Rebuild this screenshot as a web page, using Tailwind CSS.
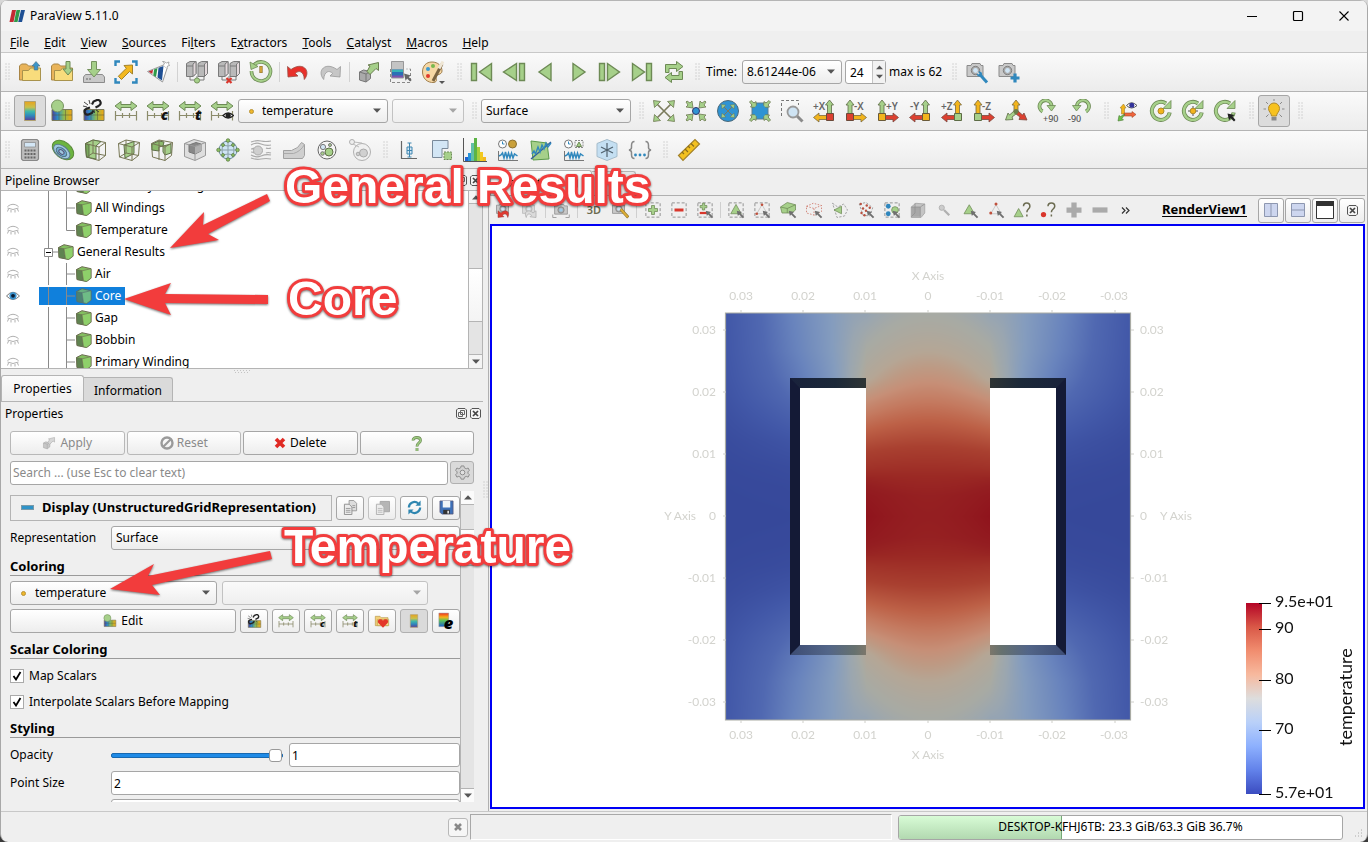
<!DOCTYPE html>
<html lang="en">
<head>
    <meta charset="UTF-8">
    <meta name="viewport" content="width=device-width, initial-scale=1.0">
    <title>ParaView 5.11.0</title>
    <script src="https://cdn.jsdelivr.net/npm/@tailwindcss/browser@4"></script>
</head>
<body class="h-screen bg-linear-to-b from-[#d8d8d8] to-[#3a3a3a] font-['Noto_Sans','Open_Sans',sans-serif] text-xs text-black overflow-hidden">

    <!-- Icon sprite -->
    <svg class="absolute w-0 h-0 invisible" xmlns="http://www.w3.org/2000/svg">
        <defs>
            <linearGradient id="rainbow" x1="0" y1="0" x2="0" y2="1">
                <stop offset="0" stop-color="#e8a21d"/><stop offset=".3" stop-color="#c9c04a"/><stop offset=".52" stop-color="#3fb8a8"/><stop offset=".75" stop-color="#2f86bd"/><stop offset="1" stop-color="#5c3c94"/>
            </linearGradient>
            <linearGradient id="rainbowH" x1="0" y1="0" x2="1" y2="0">
                <stop offset="0" stop-color="#4a3f9a"/><stop offset=".3" stop-color="#2d93c8"/><stop offset=".6" stop-color="#8fba50"/><stop offset="1" stop-color="#f3a712"/>
            </linearGradient>
            <linearGradient id="jet" x1="0" y1="0" x2="0" y2="1">
                <stop offset="0" stop-color="#f0311d"/><stop offset=".3" stop-color="#f7b21a"/><stop offset=".55" stop-color="#5cc45a"/><stop offset="1" stop-color="#1b5fd0"/>
            </linearGradient>
        </defs>
        <symbol id="logo" viewBox="0 0 16 14"><path d="M3 1h4L4.500 13H.5z" fill="#c22a33"/><path d="M7.500 1h3.700L8.500 13H5z" fill="#2f9a49"/><path d="M12 1h4l-3 12H9.200z" fill="#1e4f94"/></symbol>
        <symbol id="open" viewBox="0 0 24 24"><path d="M1.500 20V6l2-2h5l2 2h9v14z" fill="#e9b45a" stroke="#a98545"/><path d="M4.500 20.500V10.500h6l2-2.500H22.500v12.500z" fill="#f8dc7c" stroke="#a9934d"/><path d="M18 1.500l4 4.500h-2.200v4h-3.600V6H14z" fill="#3b95c9" stroke="#4f6f80" stroke-width=".6"/></symbol>
        <symbol id="load" viewBox="0 0 24 24"><path d="M1.500 20V6l2-2h5l2 2h9v14z" fill="#e9b45a" stroke="#a98545"/><path d="M4.500 20.500V10.500h6l2-2.500H22.500v12.500z" fill="#f8dc7c" stroke="#a9934d"/><path d="M16 1.500h4V9h3l-5 6-5-6h3z" fill="#a6d08a" stroke="#6d8a55"/></symbol>
        <symbol id="save" viewBox="0 0 24 24"><path d="M3.500 14.500h17l2 2.500v5.500h-21V17z" fill="#c9c9c9" stroke="#8b8b8b"/><circle cx="5" cy="19" r="1" fill="#888"/><circle cx="8" cy="19" r="1" fill="#888"/><path d="M9.500 1.500h5v8h4L12 17 5.500 9.500h4z" fill="#a6d08a" stroke="#76935e"/></symbol>
        <symbol id="capture" viewBox="0 0 24 24"><path d="M1.500 6V1.500H6M18 1.500h4.500V6M22.500 18v4.500H18M6 22.500H1.500V18" fill="none" stroke="#3088bd" stroke-width="2.400"/><path d="M18.500 5v9l-3-2.500-8 8-3.200-3.200 8-8L10 5.500z" fill="#f3b81f" stroke="#a3822a"/></symbol>
        <symbol id="catalyst" viewBox="0 0 24 24"><path d="M17.500 5L21 8.500 16.500 22 1.500 11.500z" fill="#fff" stroke="#9a9a9a"/><path d="M2.500 11.500l4.500-1.800-.7 4.300z" fill="#c22a33"/><path d="M8 9.500l3.500-1.500L10 17l-2.700-1.800z" fill="#2f9a49"/><path d="M12.500 7.700l5-1.700L16 20.500l-4.500-3z" fill="#1e4f94"/><path d="M17.500 5l1-2-2-1.500 1.500 0 2.500 1.500 2.500-1-.5 2 1.200 1.500-2.200.5-.5 2.500" stroke="#999" fill="#fff" stroke-width=".8"/></symbol>
        <symbol id="server" viewBox="0 0 24 24"><g stroke="#7a7a7a" stroke-width="1"><path d="M1.500 3.500L5 1.500h6v12l-3 3H1.500z" fill="#b9b9b9"/><path d="M8 4l3-2.500v12l-3 3z" fill="#e3d9dc"/><path d="M13 3.500l3.500-2h6v12l-3 3H13z" fill="#b9b9b9"/><path d="M19.500 4l3-2.500v12l-3 3z" fill="#e3d9dc"/><path d="M1.500 6h6.500M13 6h6M5 16.500v3.500h14v-3.500M12 16v4" fill="none"/></g></symbol>
        <symbol id="connect" viewBox="0 0 24 24"><use href="#server"/><circle cx="12" cy="20.500" r="2.600" fill="#a6d08a" stroke="#76935e"/></symbol>
        <symbol id="disconnect" viewBox="0 0 24 24"><use href="#server"/><path d="M9.500 18l5 5m0-5l-5 5" stroke="#d9362c" stroke-width="2.200"/></symbol>
        <symbol id="history" viewBox="0 0 24 24"><path d="M5 5a9.500 9.500 0 1 1-2.500 6" fill="none" stroke="#6d8a55" stroke-width="3.600"/><path d="M5 5a9.500 9.500 0 1 1-2.500 6" fill="none" stroke="#a6d08a" stroke-width="2"/><path d="M1 2l1 7.500 7-3z" fill="#a6d08a" stroke="#6d8a55" stroke-width=".8"/><path d="M12 6v7" stroke="#8a6d2a" stroke-width="3.200"/><path d="M12 6.500v6" stroke="#d9a93c" stroke-width="1.800"/></symbol>
        <symbol id="undo" viewBox="0 0 24 24"><path d="M1.500 6.500L2 17l10-1-2.700-2.700c3.500-3.300 8.500-2.300 9 6.200C25.500 11 17 1 5 9.500z" fill="#e8302a" stroke="#9a4f45" stroke-width=".8"/></symbol>
        <symbol id="redo" viewBox="0 0 24 24"><path d="M22.500 6.500L22 17l-10-1 2.700-2.700c-3.500-3.300-8.500-2.300-9 6.200C-1.500 11 7 1 19 9.500z" fill="#c6c6c6" stroke="#999" stroke-width=".8"/></symbol>
        <symbol id="extract" viewBox="0 0 24 24"><path d="M2.500 12l4-2 7 1.500v7L9 22l-6.500-2z" fill="#aaa" stroke="#777"/><path d="M2.500 12l6.500 2v8M9 14l4.500-2.500" fill="none" stroke="#777"/><path d="M21.500 2.500v8l-2.500-2-6 6-3-3 3-5.500L11 5z" fill="#a6d08a" stroke="#6b7f50"/></symbol>
        <symbol id="grad-sel" viewBox="0 0 24 24"><path d="M2.500 1.500h12V18h-12z" fill="#7a50b0" stroke="#999"/><path d="M3 2h11v7.500H3z" fill="#c4c4c4"/><path d="M3 9.500h11V12H3z" fill="#38b3b5"/><path d="M3 12h11v3.500H3z" fill="#2a70b5"/><path d="M1.500 9v13.500h20V9h-4" fill="none" stroke="#888" stroke-dasharray="3 2"/><path d="M15 13.500l7 2-2.300 1.400 3 3.100-1.600 1.600-3-3-1.500 2.200z" fill="#666"/></symbol>
        <symbol id="palette" viewBox="0 0 24 24"><path d="M11 2c6 0 10 4 10 9 0 4-6 3-6 6s2 4-2 5.500C6 23 1.500 18 1.500 12S5 2 11 2z" fill="#f6d7a4" stroke="#a07f4d"/><circle cx="7" cy="9" r="2" fill="#3d9bd2"/><circle cx="12" cy="6" r="2" fill="#79b94e"/><circle cx="7" cy="16" r="2" fill="#e03a2c"/><path d="M21 4l-9 17" stroke="#7a6340" stroke-width="3"/><path d="M22 1.500l-4 7" stroke="#efe6d5" stroke-width="3"/><path d="M18 21h6l-3 3z" fill="#555"/></symbol>
        <symbol id="first" viewBox="0 0 24 24"><path d="M1.500 3.500h5v17h-5z M21.500 3.500v17L9.500 12z" fill="#a6d08a" stroke="#6d8a55" stroke-width="1.400"/></symbol>
        <symbol id="prev" viewBox="0 0 24 24"><path d="M17.500 3.500h5v17h-5z M14.500 3.500v17L1.500 12z" fill="#a6d08a" stroke="#6d8a55" stroke-width="1.400"/></symbol>
        <symbol id="rev" viewBox="0 0 24 24"><path d="M17 3.500v17L5 12z" fill="#a6d08a" stroke="#6d8a55" stroke-width="1.400"/></symbol>
        <symbol id="play" viewBox="0 0 24 24"><path d="M7 3.500v17L19 12z" fill="#a6d08a" stroke="#6d8a55" stroke-width="1.400"/></symbol>
        <symbol id="next" viewBox="0 0 24 24"><path d="M1.500 3.500h5v17h-5z M9.500 3.500v17l12-8.500z" fill="#a6d08a" stroke="#6d8a55" stroke-width="1.400"/></symbol>
        <symbol id="last" viewBox="0 0 24 24"><path d="M16.500 3.500h5v17h-5z M2.500 3.500v17l12-8.500z" fill="#a6d08a" stroke="#6d8a55" stroke-width="1.400"/></symbol>
        <symbol id="loop" viewBox="0 0 24 24"><g fill="#a6d08a" stroke="#6d8a55"><path d="M3.500 12.500V4.500h11V1.500l6.500 5-6.500 5V8.500H7v4z"/><path d="M20.500 11.500v8h-11v3l-6.500-5 6.500-5v3H17v-4z"/></g></symbol>
        <symbol id="camera" viewBox="0 0 24 24"><path d="M2 5.500h4l1-2h8l1 2h2v11H2z" fill="#c9c9c9" stroke="#8b8b8b"/><circle cx="10.500" cy="10.500" r="4.200" fill="#aaa" stroke="#808080"/><circle cx="10.500" cy="10.500" r="2.400" fill="#cfe4f4"/></symbol>
        <symbol id="cam-wrench" viewBox="0 0 24 24"><use href="#camera"/><path d="M14 13.500l8 9" stroke="#3088bd" stroke-width="3"/><circle cx="14.500" cy="14" r="2.500" fill="#3088bd"/><path d="M12 12l2 2" stroke="#d5d5d5" stroke-width="1.600"/></symbol>
        <symbol id="cam-plus" viewBox="0 0 24 24"><use href="#camera"/><path d="M18 13.500v9M13.500 18h9" stroke="#3088bd" stroke-width="3.200"/></symbol>
        <symbol id="cam-undo" viewBox="0 0 24 24"><use href="#camera"/><path d="M4 13v9l8-1-2-2c3-3 6-2 7 3 4-8-3-12-9-6z" fill="#e03a30" stroke="#8d3a33" stroke-width=".6"/></symbol>
        <symbol id="cam-redo" viewBox="0 0 24 24"><g opacity=".55"><use href="#camera"/><path d="M20 13v9l-8-1 2-2c-3-3-6-2-7 3-4-8 3-12 9-6z" fill="#ccc" stroke="#777"/></g></symbol>
        <symbol id="cam-cap" viewBox="0 0 24 24"><path d="M3.500 6.500h4l1-2h7l1 2h4v11h-17z" fill="#c9c9c9" stroke="#8b8b8b"/><circle cx="12" cy="12" r="4.200" fill="#aaa" stroke="#808080"/><circle cx="12" cy="12" r="2.400" fill="#9fcbe8"/><path d="M1 18v4h5M18 22h5v-4" fill="none" stroke="#888"/><path d="M4 3h3" stroke="#d33"/></symbol>
        <symbol id="cam-pencil" viewBox="0 0 24 24"><use href="#camera"/><path d="M13 11l10 11" stroke="#8d7125" stroke-width="4"/><path d="M13 11l9.500 10.500" stroke="#dcae37" stroke-width="2.500"/></symbol>
        <symbol id="bar" viewBox="0 0 24 24"><path d="M6.500 2.500h11v19h-11z" fill="url(#rainbow)" stroke="#b0a070"/></symbol>
        <symbol id="editmap" viewBox="0 0 24 24"><path d="M2 10.500h20v11H2z" fill="url(#rainbowH)" stroke="#7c7c5c"/><path d="M9 11v10M15.500 11v10M2 16h20" stroke="#55553a" stroke-opacity=".5"/><circle cx="7.500" cy="7" r="6" fill="#a6d08a" stroke="#76935e"/></symbol>
        <symbol id="unlink" viewBox="0 0 24 24"><path d="M2 10.500h20v11H2z" fill="url(#rainbowH)" stroke="#7c7c5c"/><path d="M9 11v10M15.500 11v10M2 16h20" stroke="#55553a" stroke-opacity=".5"/><path d="M8 8.500l-3 1c-4 1.500-2.500 7 1.500 6l3.500-1.500 1.500-2.500M10 5.500l1.500-3 3.500-1.500c4-.5 5 4.500 1.500 6l-3 1.500" fill="none" stroke="#222" stroke-width="2.200"/><path d="M2 3l4 3M7 1l1 4M1 7l4 1M14 11l3 2M12 11l.5 3" stroke="#333" stroke-width=".9"/></symbol>
        <symbol id="range" viewBox="0 0 24 24"><path d="M1 7l6-4.500v3h10v-3L23 7l-6 4.500v-3H7v3z" fill="#a6d08a" stroke="#6d8a55"/><path d="M1.500 12v9.500M8.500 14v5M15.500 14v5M22.500 12v9.500M1.500 16.500h21" fill="none" stroke="#8b8b6b" stroke-width="1.200"/></symbol>
        <symbol id="range-c" viewBox="0 0 24 24"><use href="#range"/><text x="15" y="21" font-family="Noto Sans" font-weight="900" font-style="italic" font-size="14" fill="#111">c</text></symbol>
        <symbol id="range-t" viewBox="0 0 24 24"><use href="#range"/><text x="17" y="21" font-family="Noto Sans" font-weight="900" font-style="italic" font-size="14" fill="#111">t</text></symbol>
        <symbol id="range-v" viewBox="0 0 24 24"><use href="#range"/><path d="M13 16.500q5-5 10.500 0-5.500 5-10.500 0z" fill="#fff" stroke="#222" stroke-width="1.300"/><circle cx="18.200" cy="16.500" r="2.600" fill="#222"/></symbol>
        <symbol id="resetcam" viewBox="0 0 24 24"><path d="M5 5l14 14M19 5L5 19" stroke="#7a7a5c" stroke-width="1.600"/><path d="M1.500 1.500l7 1-6 6zM22.500 1.500l-7 1 6 6zM1.500 22.500l7-1-6-6zM22.500 22.500l-7-1 6-6z" fill="#a6d08a" stroke="#6d7a50" stroke-width=".8"/></symbol>
        <symbol id="arrows-in" viewBox="0 0 24 24"><g fill="#a6d08a" stroke="#6d7a50" stroke-width=".8"><path d="M9 9l-1-7-2 2-3-2-1 1 2 3-2 2z"/><path d="M15 9l1-7 2 2 3-2 1 1-2 3 2 2z"/><path d="M9 15l-1 7-2-2-3 2-1-1 2-3-2-2z"/><path d="M15 15l1 7 2-2 3 2 1-1-2-3 2-2z"/></g></symbol>
        <symbol id="zoomdata" viewBox="0 0 24 24"><use href="#arrows-in"/><circle cx="12" cy="12" r="3.500" fill="#2f93d3" stroke="#336"/></symbol>
        <symbol id="ballout" viewBox="0 0 24 24"><circle cx="12" cy="12" r="10.500" fill="#2f93d3" stroke="#4d6a7a"/><use href="#resetcam" x="4.500" y="4.500" width="15" height="15"/></symbol>
        <symbol id="boxout" viewBox="0 0 24 24"><path d="M4 4h16v16H4z" fill="#2f93d3" stroke="#5a7d90"/><g fill="#a6d08a" stroke="#6d7a50" stroke-width=".8"><path d="M8.500 8.500L8 2.500 6 4 3 1.500 1.500 3 4 6 2.500 8z"/><path d="M15.500 8.500l.5-6L18 4l3-2.500L22.500 3 20 6l1.500 2z"/><path d="M8.500 15.500l-.5 6L6 20l-3 2.500L1.500 21 4 18l-1.500-2z"/><path d="M15.500 15.500l.5 6 2-1.500 3 2.500 1.500-1.500-2.500-3 1.500-2z"/></g><circle cx="12" cy="12" r="6.500" fill="#2f93d3"/></symbol>
        <symbol id="zoombox" viewBox="0 0 24 24"><path d="M1.500 17V1.500h17V6" fill="none" stroke="#777" stroke-dasharray="3 2"/><path d="M17 17l5.500 5.500" stroke="#8a8a8a" stroke-width="3"/><circle cx="13" cy="13" r="5.500" fill="#cfe4f4" stroke="#999" stroke-width="1.800"/></symbol>
        <symbol id="vxp" viewBox="0 0 24 24"><path d="M17.500 1l4 5h-2v9h-4V6h-2z" fill="#a6d08a" stroke="#5d6b45" stroke-width=".8"/><path d="M15 16.500H7V14l-5.500 4.500L7 23v-2.500h8z" fill="#f2b41c" stroke="#7a6a40" stroke-width=".8"/><path d="M14.500 14.500h7v7h-7z" fill="#dc4030" stroke="#6a4a3a"/><text x="1" y="11" font-family="Noto Sans" font-weight="600" font-size="10" fill="#666">+X</text></symbol>
        <symbol id="vxm" viewBox="0 0 24 24"><path d="M6 1l4 5H8v9H4V6H2z" fill="#a6d08a" stroke="#5d6b45" stroke-width=".8"/><path d="M9 16.500h8V14l5.500 4.500L17 23v-2.500H9z" fill="#f2b41c" stroke="#7a6a40" stroke-width=".8"/><path d="M2.500 14.500h7v7h-7z" fill="#dc4030" stroke="#6a4a3a"/><text x="10" y="11" font-family="Noto Sans" font-weight="600" font-size="10" fill="#666">-X</text></symbol>
        <symbol id="vyp" viewBox="0 0 24 24"><path d="M6 1l4 5H8v9H4V6H2z" fill="#a6d08a" stroke="#5d6b45" stroke-width=".8"/><path d="M9 16.500h8V14l5.500 4.500L17 23v-2.500H9z" fill="#dc4030" stroke="#7a4a40" stroke-width=".8"/><path d="M2.500 14.500h7v7h-7z" fill="#f2b41c" stroke="#6a5a3a"/><text x="10" y="11" font-family="Noto Sans" font-weight="600" font-size="10" fill="#666">+Y</text></symbol>
        <symbol id="vym" viewBox="0 0 24 24"><path d="M17.500 1l4 5h-2v9h-4V6h-2z" fill="#a6d08a" stroke="#5d6b45" stroke-width=".8"/><path d="M15 16.500H7V14l-5.500 4.500L7 23v-2.500h8z" fill="#dc4030" stroke="#7a4a40" stroke-width=".8"/><path d="M14.500 14.500h7v7h-7z" fill="#f2b41c" stroke="#6a5a3a"/><text x="2" y="11" font-family="Noto Sans" font-weight="600" font-size="10" fill="#666">-Y</text></symbol>
        <symbol id="vzp" viewBox="0 0 24 24"><path d="M17.500 1l4 5h-2v9h-4V6h-2z" fill="#f2b41c" stroke="#7a6a40" stroke-width=".8"/><path d="M15 16.500H7V14l-5.500 4.500L7 23v-2.500h8z" fill="#dc4030" stroke="#7a4a40" stroke-width=".8"/><path d="M14.500 14.500h7v7h-7z" fill="#a6d08a" stroke="#5d6b45"/><text x="1" y="11" font-family="Noto Sans" font-weight="600" font-size="10" fill="#666">+Z</text></symbol>
        <symbol id="vzm" viewBox="0 0 24 24"><path d="M6 1l4 5H8v9H4V6H2z" fill="#f2b41c" stroke="#7a6a40" stroke-width=".8"/><path d="M9 16.500h8V14l5.500 4.500L17 23v-2.500H9z" fill="#dc4030" stroke="#7a4a40" stroke-width=".8"/><path d="M2.500 14.500h7v7h-7z" fill="#a6d08a" stroke="#5d6b45"/><text x="10" y="11" font-family="Noto Sans" font-weight="600" font-size="10" fill="#666">-Z</text></symbol>
        <symbol id="iso" viewBox="0 0 24 24"><path d="M12 1l4 5h-2v6h-4V6H8z" fill="#f2b41c" stroke="#7a6a40" stroke-width=".8"/><path d="M10 12l2 3-4 3 1 2.500-7.500.5L4 14l1.500 2z" fill="#a6d08a" stroke="#5d6b45" stroke-width=".8"/><path d="M14 12l-2 3 4 3-1 2.500 8 .5-3-7-1.500 2z" fill="#dc4030" stroke="#7a4a40" stroke-width=".8"/><circle cx="12" cy="12.500" r="2.500" fill="#6a7d4a"/></symbol>
        <symbol id="rotp" viewBox="0 0 24 24"><path d="M6.500 12.500a6 6 0 1 1 9-4.500" fill="none" stroke="#6d8a55" stroke-width="3.800"/><path d="M6.500 12.500a6 6 0 1 1 9-4.500" fill="none" stroke="#a6d08a" stroke-width="2.200"/><path d="M11 6.500h8.500l-4 5.500z" fill="#a6d08a" stroke="#6d8a55" stroke-width=".8"/><text x="7" y="23" font-family="Noto Sans" font-weight="500" font-size="9" fill="#555">+90</text></symbol>
        <symbol id="rotm" viewBox="0 0 24 24"><path d="M18 12.500a6 6 0 1 0-9-4.500" fill="none" stroke="#6d8a55" stroke-width="3.800"/><path d="M18 12.500a6 6 0 1 0-9-4.500" fill="none" stroke="#a6d08a" stroke-width="2.200"/><path d="M13 6.500H4.500l4 5.500z" fill="#a6d08a" stroke="#6d8a55" stroke-width=".8"/><text x="0" y="23" font-family="Noto Sans" font-weight="500" font-size="9" fill="#555">-90</text></symbol>
        <symbol id="axeye" viewBox="0 0 24 24"><path d="M6.500 5L9 9H7.500v6h-3V9H3z" fill="#f2b41c" stroke="#a3822a" stroke-width=".6"/><path d="M7 14h8v-1.500l4 3-4 3V17H7z" fill="#f0643c" stroke="#a34a2a" stroke-width=".6"/><path d="M8 15l-3 4.500 1.500 1.500L1 22l1-5.500 1.500 1z" fill="#6cc04a" stroke="#4b7a35" stroke-width=".6"/><path d="M9.500 6.500q5-5.500 10.500 0-5.500 5-10.500 0z" fill="#fff" stroke="#555"/><circle cx="14.800" cy="6.300" r="2.500" fill="#33339a"/></symbol>
        <symbol id="ring" viewBox="0 0 24 24"><path d="M20.700 13.500A9 9 0 1 1 17 4.500" fill="none" stroke="#6d8a55" stroke-width="4"/><path d="M20.600 14A9 9 0 1 1 17 4.500" fill="none" stroke="#a6d08a" stroke-width="2.400"/><path d="M22 1.500v8h-8z" fill="#a6d08a" stroke="#6d8a55" stroke-width=".8"/></symbol>
        <symbol id="center1" viewBox="0 0 24 24"><use href="#ring"/><circle cx="12" cy="12" r="3" fill="#f2b41c" stroke="#b08a2a"/></symbol>
        <symbol id="center2" viewBox="0 0 24 24"><use href="#ring"/><path d="M12 7v10M7 12h10" stroke="#555"/><circle cx="12" cy="12" r="2.800" fill="#f2b41c" stroke="#b08a2a"/></symbol>
        <symbol id="center3" viewBox="0 0 24 24"><use href="#ring"/><path d="M14.500 14.500l7 1.500-2 1.500 3 3.500-1.500 1.500-3.200-3.200-1.800 2z" fill="#222"/></symbol>
        <symbol id="bulb" viewBox="0 0 24 24"><path d="M9.500 17c0-3-3-4-3-7.500a5.500 5.500 0 0 1 11 0c0 3.500-3 4.500-3 7.500z" fill="#f7c21f" stroke="#b08a2a"/><path d="M9.500 18h5v3.500h-5z" fill="#8a8a8a"/><path d="M12 0v2M4 3l2 2M20 3l-2 2M1.500 10H4M20 10h2.500M4 18l2.500-2.500M20 18l-2.500-2.500" stroke="#8a8a8a"/></symbol>
        <symbol id="calc" viewBox="0 0 24 24"><path d="M3.500 3l1.500-1.500h14L20.500 3v18L19 22.500H5L3.500 21z" fill="#bdbdbd" stroke="#888" stroke-width="1.200"/><path d="M6.500 4.500h11V9h-11z" fill="#d3e6f5" stroke="#888" stroke-width=".7"/><path d="M6.500 12.500h11M6.500 16h11M6.500 19.500h11" stroke="#666" stroke-width="2" stroke-dasharray="2 1"/></symbol>
        <symbol id="contour" viewBox="0 0 24 24"><g transform="rotate(38 12 12)"><ellipse cx="12" cy="12" rx="12" ry="8" fill="#6cb440" stroke="#5b8a3a"/><ellipse cx="12" cy="14" rx="9.500" ry="5.500" fill="#9fc8e0" stroke="#5a7a8a"/><ellipse cx="12" cy="14.500" rx="6" ry="3.500" fill="#6fa9ce" stroke="#4a6a7a"/><ellipse cx="12" cy="14.500" rx="3" ry="1.800" fill="#9fc8e0" stroke="#557"/></g></symbol>
        <symbol id="clip" viewBox="0 0 24 24"><path d="M1.500 5.500L9 2l12.500 2.500v13L15 22.500 2.500 19z" fill="none" stroke="#777755"/><path d="M1.500 5.500L9 2l8 1.500-5 4.500v13L2.500 19z" fill="#a6d08a" stroke="#5f7048"/><path d="M1.500 5.500L5 7v12.500l-2.500-.5z" fill="#79a85c" stroke="#5f7048"/><path d="M1.500 5.500L15 9l6.500-4.500M15 9v13M9 2v13l12.500 2.500M9 15l-6.500 4" fill="none" stroke="#777755"/></symbol>
        <symbol id="slice" viewBox="0 0 24 24"><path d="M1.500 5.500L9 2l13.500 2.500-1 13L15 22.500 2.500 19z" fill="none" stroke="#777755"/><path d="M7 7l10-3.500v12L8 20z" fill="#a6d08a" stroke="#5f7048"/><path d="M1.500 5.500L15 9l7.500-4.500M15 9v13.500M9 2v13l12.500 2.500M9 15l-6.500 4" fill="none" stroke="#777755"/></symbol>
        <symbol id="threshold" viewBox="0 0 24 24"><path d="M1.500 5.500L9 2l13.500 2.500-1 13L15 22.500 2.500 19z" fill="none" stroke="#777755"/><path d="M2 6l7-3 5 1-1 4-4 1v4l-7-1z" fill="#8cba6c" stroke="#5f7048"/><path d="M13 8l8-2v9l-6 2-2-3z" fill="#a6d08a" stroke="#5f7048"/><path d="M1.500 5.500L15 9l7.500-4.500M15 9v13.500M9 2v20" fill="none" stroke="#777755"/></symbol>
        <symbol id="subset" viewBox="0 0 24 24"><path d="M1.500 5.500L11 1.500l11.500 3v13L12 22.500l-10.500-4z" fill="#dedede" stroke="#999"/><path d="M6 7l7-2.500 5 1.500v7l-6 3-6-2z" fill="#888" stroke="#777"/><path d="M12 8l6-2v7l-6 3z" fill="#b0b0b0"/><path d="M1.500 5.500L12 8.500l10.500-4M12 16v6" fill="none" stroke="#999"/></symbol>
        <symbol id="glyph" viewBox="0 0 24 24"><circle cx="12" cy="12" r="9" fill="#cfe5f4" stroke="#6f8f9f"/><path d="M12 3v18M3 12h18M6 6q6 4 12 0M6 18q6-4 12 0M8 4q-4 8 0 16M16 4q4 8 0 16" fill="none" stroke="#8aa0a8"/><g fill="#8cc063" stroke="#56753f" stroke-width=".7"><circle cx="12" cy="2.500" r="1.800"/><circle cx="12" cy="21.500" r="1.800"/><circle cx="2.500" cy="12" r="1.800"/><circle cx="21.500" cy="12" r="1.800"/><circle cx="7" cy="7" r="1.500"/><circle cx="17" cy="7" r="1.500"/><circle cx="7" cy="17" r="1.500"/><circle cx="17" cy="17" r="1.500"/></g></symbol>
        <symbol id="stream" viewBox="0 0 24 24"><path d="M2 4q5-2 10-1t10 0M2 7q5-3 10-1t10 1M2 20q5 2 10 1t10 0M2 17q5 3 10 1t10-1M2 11q2 0 3-1M2 14q2 0 3 1M17 10q2 1 5 0M17 15q2-1 5 0" fill="none" stroke="#aaa" stroke-width="1.200"/><circle cx="9" cy="12.500" r="4.500" fill="#cfcfcf" stroke="#aaa"/></symbol>
        <symbol id="warp" viewBox="0 0 24 24"><path d="M1.500 12.500h8q7-2 10-8l3 2v11l-2 3h-19z" fill="#cfcfcf" stroke="#a0a0a0"/><path d="M1.500 15.500h10q7-2 11-9" fill="none" stroke="#aaa"/></symbol>
        <symbol id="group" viewBox="0 0 24 24"><circle cx="12" cy="12" r="9" fill="#f5f5f5" stroke="#666"/><circle cx="8" cy="9" r="2.600" fill="#d3e6f5" stroke="#777"/><circle cx="14" cy="14" r="4" fill="#a6d08a" stroke="#5f7048"/><circle cx="15" cy="7" r="1.500" fill="#a6d08a" stroke="#777"/><circle cx="7.500" cy="15.500" r="1.800" fill="#a6d08a" stroke="#777"/></symbol>
        <symbol id="level" viewBox="0 0 24 24"><circle cx="14" cy="14" r="8.500" fill="#f0f0f0" stroke="#b0b0b0"/><circle cx="4" cy="4" r="2.500" fill="#eee" stroke="#b0b0b0"/><circle cx="15.500" cy="15" r="4" fill="#d0d0d0" stroke="#aaa"/><circle cx="10" cy="16" r="1.800" fill="#ccc" stroke="#aaa"/><path d="M5 6l6 3M6 4l8 1" stroke="#bbb"/></symbol>
        <symbol id="box-ax" viewBox="0 0 24 24"><path d="M4.500 3v17.500H20" fill="none" stroke="#666" stroke-width="1.200"/><path d="M12.500 5v14M10.500 5h4M10.500 19h4M10 9h5v7h-5zM10 12.500h5" fill="#d3e6f5" stroke="#3f86b0"/></symbol>
        <symbol id="extsel" viewBox="0 0 24 24"><path d="M2.500 2.500h15.500v8h-6v9h-9.500z" fill="#d3e6f5" stroke="#7a8a9a"/><path d="M14 14h7.500v7.500H14z" fill="#a6d08a" stroke="#6d8a55" stroke-dasharray="2 1"/></symbol>
        <symbol id="histo" viewBox="0 0 24 24"><path d="M2 19h3v4H2z" fill="#1e63d0"/><path d="M5 15h3v8H5z" fill="#2592d8"/><path d="M8 5h3v18H8z" fill="#62bfa8"/><path d="M11 0h3v23h-3z" fill="#5cb445"/><path d="M14 9h3v14h-3z" fill="#a8cf3c"/><path d="M17 14h3v9h-3z" fill="#f2c91f"/><path d="M20 19h3v4h-3z" fill="#f3b81f"/><path d="M.5 0v23.500H24" fill="none" stroke="#555"/></symbol>
        <symbol id="wave" viewBox="0 0 24 24"><path d="M2.500 13v9.500H22" fill="none" stroke="#777"/><path d="M3 18l2-1 1.500-2 1.500 5 1.500-6 1.500 6 1.500-5 1.500 5 1.500-5 1.500 5 1.500-4 3 2" fill="none" stroke="#3088bd" stroke-width="1.500"/><circle cx="6.500" cy="6" r="4" fill="#fff" stroke="#777"/><path d="M6.500 3.500V6h2" fill="none" stroke="#3088bd"/></symbol>
        <symbol id="plottime" viewBox="0 0 24 24"><use href="#wave"/><circle cx="16.500" cy="6" r="4" fill="#c9a03a" stroke="#8a7030"/></symbol>
        <symbol id="plotline" viewBox="0 0 24 24"><path d="M2 3l16 2 2 16-16 1z" fill="#a6d08a" stroke="#5b9a4a"/><path d="M2 21L22 4" stroke="#335f9a" stroke-width="1.400"/><path d="M3 16l2-3 1.500 3 2.500-7 2 5 2-7 2 4 2-6 2 4 3-4" fill="none" stroke="#3088bd" stroke-width="1.400"/></symbol>
        <symbol id="plotsel" viewBox="0 0 24 24"><use href="#wave"/><path d="M13 2.500h8v7h-8z" fill="none" stroke="#888" stroke-dasharray="2 1"/><path d="M17 4l2.500 4.500h-5z" fill="#a6d08a" stroke="#6d8a55"/></symbol>
        <symbol id="probe" viewBox="0 0 24 24"><path d="M2 5.500L12 1.500l10 4v13l-10 4-10-4z" fill="#c4dff2" stroke="#a5bccb"/><path d="M12 5v14M6 9l12 6M18 9L6 15" stroke="#51626e" stroke-width="1.200"/></symbol>
        <symbol id="program" viewBox="0 0 24 24"><path d="M6.500 3.500q-3 0-3 4v2q0 2-2.500 2.500 2.500.5 2.500 2.500v2q0 4 3 4M17.500 3.500q3 0 3 4v2q0 2 2.500 2.500-2.500.5-2.500 2.500v2q0 4-3 4" fill="none" stroke="#888" stroke-width="1.500"/><circle cx="7.500" cy="17" r="1.400" fill="#3088bd"/><circle cx="12" cy="17" r="1.400" fill="#3088bd"/><circle cx="16.500" cy="17" r="1.400" fill="#3088bd"/></symbol>
        <symbol id="ruler" viewBox="0 0 24 24"><path d="M1.500 17.500L18 1.500l4.500 4.500L6 22.500z" fill="#f3c11f" stroke="#a3822a" stroke-width="1.200"/><path d="M5 14l2 2M8 11l3 3M11 8l2 2M14 5.500l3 3" stroke="#8a6d1a" stroke-width="1.200"/></symbol>

        <symbol id="marquee" viewBox="0 0 24 24"><path d="M2.500 2.500h19v19h-19z" fill="none" stroke="#8a8a8a" stroke-width="1.200" stroke-dasharray="4 2.500"/></symbol>
        <symbol id="cur" viewBox="0 0 24 24"><path d="M13 13l7 1.500-2 1.800 5 5-1.800 1.700-5-5-1.700 2z" fill="#6f6f6f"/></symbol>
        <symbol id="sel-add" viewBox="0 0 24 24"><use href="#marquee"/><path d="M10 6h4v4h4v4h-4v4h-4v-4H6v-4h4z" fill="#a6d08a" stroke="#6d8a55"/></symbol>
        <symbol id="sel-sub" viewBox="0 0 24 24"><use href="#marquee"/><path d="M6 10h12v4H6z" fill="#d9362c"/></symbol>
        <symbol id="sel-tog" viewBox="0 0 24 24"><use href="#marquee"/><path d="M8.500 3h3v3h3v3h-3v3h-3V9h-3V6h3z" fill="#a6d08a" stroke="#6d8a55"/><path d="M5 14.500h10v3H5z" fill="#d9362c"/><use href="#cur"/></symbol>
        <symbol id="sel-cell" viewBox="0 0 24 24"><use href="#marquee"/><path d="M12 4.500l7 12.500H5z" fill="#a6d08a" stroke="#6d8a55"/><use href="#cur"/></symbol>
        <symbol id="sel-pt" viewBox="0 0 24 24"><use href="#marquee"/><path d="M12 5l7 12H5z" fill="none" stroke="#bbb"/><circle cx="12" cy="5" r="1.800" fill="#c0503c"/><circle cx="5" cy="17" r="1.800" fill="#c0503c"/><use href="#cur"/></symbol>
        <symbol id="sel-fc" viewBox="0 0 24 24"><path d="M2 8l9-6 11 3v7l-5 4H4z" fill="#a6d08a" stroke="#6d8a55"/><path d="M2 8l9 2v6M11 10l11-5" fill="none" stroke="#6d8a55"/><use href="#cur"/></symbol>
        <symbol id="sel-fp" viewBox="0 0 24 24"><path d="M2 7l9-4 11 3v8l-9 5-11-3zM2 7l10 3 10-4M12 10v9" fill="none" stroke="#c9695a" stroke-dasharray="2 2"/><use href="#cur"/></symbol>
        <symbol id="sel-pc" viewBox="0 0 24 24"><path d="M2 3l7 5 8-4 5 8-4 8-10 2z" fill="none" stroke="#8a8a8a" stroke-dasharray="3 2"/><path d="M4 12l10-5v10z" fill="#a6d08a" stroke="#6d8a55"/></symbol>
        <symbol id="sel-pp" viewBox="0 0 24 24"><path d="M3 4l9-2 9 7-4 11-9-1z" fill="none" stroke="#8a8a8a" stroke-dasharray="3 2"/><g fill="#b9503f"><circle cx="5" cy="4" r="1.600"/><circle cx="8" cy="10" r="1.600"/><circle cx="13" cy="6" r="1.600"/><circle cx="17" cy="9" r="1.600"/><circle cx="12" cy="13" r="1.600"/><circle cx="6" cy="16" r="1.600"/><circle cx="10" cy="19" r="1.600"/></g><use href="#cur"/></symbol>
        <symbol id="sel-blk" viewBox="0 0 24 24"><use href="#marquee"/><circle cx="7" cy="7" r="3.200" fill="#2f86bd"/><circle cx="7" cy="17" r="3.200" fill="#2f86bd"/><circle cx="16" cy="12" r="4.500" fill="#a6d08a" stroke="#6d8a55"/><use href="#cur"/></symbol>
        <symbol id="sel-fb" viewBox="0 0 24 24"><path d="M3 8l6-5 12 1v12l-5 6H3z" fill="#c4c4c4" stroke="#a0a0a0"/><path d="M3 8h12v13H3z" fill="#a8a8a8"/><path d="M3 8h12l6-4M15 8v13M3 21l5-5V3" fill="none" stroke="#909090"/></symbol>
        <symbol id="hov-any" viewBox="0 0 24 24"><circle cx="9" cy="9" r="3.500" fill="#ccc" stroke="#aaa"/><path d="M12 12l7 7" stroke="#b0b0b0" stroke-width="3"/></symbol>
        <symbol id="hov-cell" viewBox="0 0 24 24"><path d="M11 5l7 12H4z" fill="#a6d08a" stroke="#6d8a55"/><use href="#cur"/></symbol>
        <symbol id="hov-pt" viewBox="0 0 24 24"><path d="M12 5l7 12H5z" fill="none" stroke="#bbb"/><circle cx="12" cy="4" r="2" fill="#c0503c"/><circle cx="5" cy="16" r="2" fill="#c0503c"/><use href="#cur"/></symbol>
        <symbol id="q-cell" viewBox="0 0 24 24"><path d="M7.500 10l6 11H1.500z" fill="#a6d08a" stroke="#6d8a55"/><path d="M14 7c0-6 8.500-6 8.500 0 0 4-4 3.500-4 8M18.500 18v2.500" fill="none" stroke="#6b6b50" stroke-width="2"/></symbol>
        <symbol id="q-pt" viewBox="0 0 24 24"><circle cx="6" cy="18" r="3.500" fill="#d9362c"/><path d="M12 7c0-6 9-6 9 0 0 4-4.500 3.500-4.500 8M16.500 18v2.500" fill="none" stroke="#6b6b50" stroke-width="2"/></symbol>
        <symbol id="grow" viewBox="0 0 24 24"><path d="M8.500 2h7v6.500H22v7h-6.500V22h-7v-6.500H2v-7h6.500z" fill="#aaa"/></symbol>
        <symbol id="shrink" viewBox="0 0 24 24"><path d="M2 8.500h20v7H2z" fill="#aaa"/></symbol>

        <symbol id="cube" viewBox="0 0 16 16"><path d="M.5 3.500L6 .7l9 2v9.500l-4.500 3.300L1 13.500z" fill="#83bf60" stroke="#6b6b50"/><path d="M.5 3.500L6 4.800l1.500 9.900L1 13.500z" fill="#5f8350" stroke="#6b6b50" stroke-width=".6"/><path d="M6 4.800l9-2.100v9.500l-4.500 3.300-3-.8z" fill="#8ed06a" stroke="#6b6b50" stroke-width=".6"/></symbol>
        <symbol id="eye-off" viewBox="0 0 14 12"><path d="M1.500 4.500Q7 0 12.500 4.500M1.500 6Q7 9 12.500 6M2.500 7L1.500 9.500M5 8v2.500M9 8v2.500M11.500 7l1 2.500" fill="none" stroke="#b0b0b0" stroke-width="1"/></symbol>
        <symbol id="eye-on" viewBox="0 0 14 12"><path d="M.5 6Q7-1.500 13.500 6 7 13 .5 6z" fill="#fff" stroke="#777"/><circle cx="7" cy="5.800" r="3.600" fill="#3a93cf"/><circle cx="7" cy="5.800" r="1.900" fill="#0a1a30"/></symbol>
        <symbol id="g-mid" viewBox="0 0 38 22"><path d="M10.500 0v22M28.500 0v22M28.500 11H37" fill="none" stroke="#8a8a8a"/></symbol>
        <symbol id="g-last" viewBox="0 0 38 22"><path d="M10.500 0v22M28.500 0v11.500H37" fill="none" stroke="#8a8a8a"/></symbol>
        <symbol id="down" viewBox="0 0 8 5"><path d="M0 .5h8L4 4.800z" fill="currentColor"/></symbol>
        <symbol id="float" viewBox="0 0 11 11"><path d="M2 .5h7L10.500 2v7L9 10.500H2L.5 9V2z" fill="#f4f4f4" stroke="#555"/><path d="M4.500 2.500h4v4h-4zM2.500 4.500h4v4h-4z" fill="#f4f4f4" stroke="#666"/></symbol>
        <symbol id="close" viewBox="0 0 11 11"><path d="M2 .5h7L10.500 2v7L9 10.500H2L.5 9V2z" fill="#f4f4f4" stroke="#555"/><path d="M3 3l5 5M8 3L3 8" stroke="#444" stroke-width="1.700"/></symbol>
        <symbol id="copy" viewBox="0 0 16 16"><path d="M6.500.5h5l3 3v8h-8z" fill="#ddd" stroke="#999"/><path d="M1.500 4.500h5l3 3v8h-8z" fill="#ececec" stroke="#8f8f8f"/><path d="M3 9h5M3 11h5M3 13h5M10 6h3M10 8h3" stroke="#999"/></symbol>
        <symbol id="paste" viewBox="0 0 16 16"><path d="M5.500 1.500h10v11h-10z" fill="#b5b5b5" stroke="#a5a5a5"/><path d="M1.500 4.500h5l3 3v8h-8z" fill="#ececec" stroke="#b0b0b0"/><path d="M3 9h5M3 11h5M3 13h5" stroke="#bbb"/></symbol>
        <symbol id="refresh" viewBox="0 0 16 16"><path d="M2 8a6 6 0 0 1 10-4.300M14 8a6 6 0 0 1-10 4.300" fill="none" stroke="#2f86b0" stroke-width="2.400"/><path d="M14.500.5V6H9zM1.500 15.500V10H7z" fill="#2f86b0"/></symbol>
        <symbol id="floppy" viewBox="0 0 16 16"><path d="M1 1h14v14H3l-2-2z" fill="#3d70b8" stroke="#555577" stroke-width=".8"/><path d="M4 1h8v7H4z" fill="#f0f4f8"/><path d="M4.500 10.500h7V15h-7z" fill="#333"/><path d="M9 11.500h1.500v3H9z" fill="#fff"/></symbol>
        <symbol id="fav" viewBox="0 0 24 24"><path d="M2 19V5h7l2 2h10v12z" fill="#f3d078" stroke="#b89a4d"/><path d="M5 19v-9h17v9z" fill="#f8e08f" stroke="#b89a4d"/><path d="M13.500 22l-7-7c-3-5 4-8 7-3.500 3-4.500 10-1.500 7 3.500z" fill="#e3362a"/></symbol>
        <symbol id="jet-e" viewBox="0 0 24 24"><path d="M2.500 1.500h13v18h-13z" fill="url(#jet)" stroke="#888" stroke-width=".6"/><text x="9" y="22" font-family="Noto Sans" font-weight="900" font-style="italic" font-size="22" fill="#000">e</text></symbol>
        <symbol id="gear" viewBox="0 0 16 16"><path d="M6.500 1h3l.5 2 2 1 2-.8 1.300 2.500-1.500 1.600v1.500l1.500 1.500L14 12.900l-2-.8-2 1-.5 2h-3l-.5-2-2-1-2 .8L.7 10.300l1.500-1.500V7.300L.7 5.700 2 3.200l2 .8 2-1z" fill="#d2d2d2" stroke="#8a8a8a"/><circle cx="8" cy="8" r="2.500" fill="#e0e0e0" stroke="#8a8a8a"/></symbol>
        <symbol id="grip" viewBox="0 0 5 18"><path d="M1 .5v18M4 .5v18" stroke="#b5b5b5" stroke-dasharray="1 2"/></symbol>
    </svg>

    <div class="flex flex-col h-full bg-[#efefef] border-l border-r border-[#a8a8a8] rounded-lg overflow-hidden relative">

        <!-- Title bar -->
        <header class="flex items-center h-[31px] flex-none bg-[#f3f3f3] border-t border-[#b5b5b5] pl-2">
            <svg class="w-4 h-[14px] mr-[5px]"><use href="#logo"/></svg>
            <h1 class="flex-1 text-xs">ParaView 5.11.0</h1>
            <div class="flex">
                <button aria-label="Minimize" class="w-[46px] h-[30px] flex items-center justify-center"><svg class="w-3 h-3" viewBox="0 0 12 12"><path d="M1 6.500h10" stroke="#000"/></svg></button>
                <button aria-label="Maximize" class="w-[46px] h-[30px] flex items-center justify-center"><svg class="w-3 h-3" viewBox="0 0 12 12"><rect x="1.500" y="1.500" width="9" height="9" rx="1" fill="none" stroke="#000" stroke-width="1.200"/></svg></button>
                <button aria-label="Close" class="w-[46px] h-[30px] flex items-center justify-center"><svg class="w-3 h-3" viewBox="0 0 12 12"><path d="M1.500 1.500l9 9M10.500 1.500l-9 9" stroke="#000" stroke-width="1.100"/></svg></button>
            </div>
        </header>

        <!-- Menu bar -->
        <nav class="flex items-center h-[22px] flex-none px-[9px] pt-[2px] gap-[15px] bg-[#efefef] border-b border-[#c8c8c8]">
            <a href="#"><u>F</u>ile</a>
            <a href="#"><u>E</u>dit</a>
            <a href="#"><u>V</u>iew</a>
            <a href="#"><u>S</u>ources</a>
            <a href="#">Fi<u>l</u>ters</a>
            <a href="#">E<u>x</u>tractors</a>
            <a href="#"><u>T</u>ools</a>
            <a href="#"><u>C</u>atalyst</a>
            <a href="#"><u>M</u>acros</a>
            <a href="#"><u>H</u>elp</a>
        </nav>

        <!-- Main toolbar -->
        <div class="flex items-center h-[39px] flex-none bg-linear-to-b from-[#fafafa] to-[#ececec] border-b border-[#b4b4b4]">
            <i class="w-[13px] flex-none flex justify-end pr-1"><svg class="w-[5px] h-[18px]"><use href="#grip"/></svg></i>
            <button aria-label="Open" class="w-8 h-8 flex items-center justify-center"><svg class="size-6"><use href="#open"/></svg></button>
            <button aria-label="Load state" class="w-8 h-8 flex items-center justify-center"><svg class="size-6"><use href="#load"/></svg></button>
            <button aria-label="Save state" class="w-8 h-8 flex items-center justify-center"><svg class="size-6"><use href="#save"/></svg></button>
            <button aria-label="Save screenshot" class="w-8 h-8 flex items-center justify-center"><svg class="size-6"><use href="#capture"/></svg></button>
            <button aria-label="Catalyst" class="w-8 h-8 flex items-center justify-center"><svg class="size-6"><use href="#catalyst"/></svg></button>
            <span class="w-px h-5 mx-[3px] bg-[#d2d2d2]"></span>
            <button aria-label="Connect" class="w-8 h-8 flex items-center justify-center"><svg class="size-6"><use href="#connect"/></svg></button>
            <button aria-label="Disconnect" class="w-8 h-8 flex items-center justify-center"><svg class="size-6"><use href="#disconnect"/></svg></button>
            <button aria-label="Reset session" class="w-8 h-8 flex items-center justify-center"><svg class="size-6"><use href="#history"/></svg></button>
            <span class="w-px h-5 mx-[2px] bg-[#d2d2d2]"></span>
            <button aria-label="Undo" class="w-8 h-8 flex items-center justify-center"><svg class="size-6"><use href="#undo"/></svg></button>
            <button aria-label="Redo" class="w-8 h-8 flex items-center justify-center"><svg class="size-6"><use href="#redo"/></svg></button>
            <span class="w-px h-5 mx-[3px] bg-[#d2d2d2]"></span>
            <button aria-label="Auto apply" class="w-8 h-8 flex items-center justify-center"><svg class="size-6"><use href="#extract"/></svg></button>
            <button aria-label="Find data" class="w-8 h-8 flex items-center justify-center"><svg class="size-6"><use href="#grad-sel"/></svg></button>
            <button aria-label="Color palette" class="w-8 h-8 flex items-center justify-center"><svg class="size-6"><use href="#palette"/></svg></button>
            <i class="w-[17px] flex-none flex justify-end pr-1"><svg class="w-[5px] h-[18px]"><use href="#grip"/></svg></i>
            <button aria-label="First frame" class="w-8 h-8 flex items-center justify-center"><svg class="size-6"><use href="#first"/></svg></button>
            <button aria-label="Previous frame" class="w-8 h-8 flex items-center justify-center"><svg class="size-6"><use href="#prev"/></svg></button>
            <button aria-label="Reverse" class="w-8 h-8 flex items-center justify-center"><svg class="size-6"><use href="#rev"/></svg></button>
            <button aria-label="Play" class="w-8 h-8 flex items-center justify-center"><svg class="size-6"><use href="#play"/></svg></button>
            <button aria-label="Next frame" class="w-8 h-8 flex items-center justify-center"><svg class="size-6"><use href="#next"/></svg></button>
            <button aria-label="Last frame" class="w-8 h-8 flex items-center justify-center"><svg class="size-6"><use href="#last"/></svg></button>
            <button aria-label="Loop" class="w-8 h-8 flex items-center justify-center"><svg class="size-6"><use href="#loop"/></svg></button>
            <i class="w-[14px] flex-none flex justify-end pr-1"><svg class="w-[5px] h-[18px]"><use href="#grip"/></svg></i>
            <label for="time" class="w-[38px] pl-[2px]">Time:</label>
            <div class="relative w-[100px] mr-[3px]">
                <select id="time" class="appearance-none w-full h-6 pl-1 border border-[#a6a6a6] rounded-[3px] bg-linear-to-b from-white to-[#ededed]"><option>8.61244e-06</option></select>
                <svg class="absolute right-[7px] top-[9px] w-2 h-[5px] text-[#555]"><use href="#down"/></svg>
            </div>
            <div class="relative w-[41px] mr-[3px]">
                <input aria-label="Time step" type="text" value="24" class="w-full h-6 pl-1 border border-[#a6a6a6] rounded-[3px] bg-white">
                <div class="absolute right-px top-px bottom-px w-[13px] border-l border-[#c4c4c4] bg-[#f2f2f2] flex flex-col items-center justify-evenly text-[#555]">
                    <svg class="w-[7px] h-[5px] rotate-180"><use href="#down"/></svg>
                    <svg class="w-[7px] h-[5px]"><use href="#down"/></svg>
                </div>
            </div>
            <span>max is 62</span>
            <i class="w-[19px] flex-none flex justify-end pr-1"><svg class="w-[5px] h-[18px]"><use href="#grip"/></svg></i>
            <button aria-label="Camera settings" class="w-8 h-8 flex items-center justify-center"><svg class="size-6"><use href="#cam-wrench"/></svg></button>
            <button aria-label="Add camera" class="w-8 h-8 flex items-center justify-center"><svg class="size-6"><use href="#cam-plus"/></svg></button>
        </div>

        <!-- Color and camera toolbar -->
        <div class="flex items-center h-[39px] flex-none bg-linear-to-b from-[#fafafa] to-[#ececec] border-b border-[#b4b4b4]">
            <i class="w-[13px] flex-none flex justify-end pr-1"><svg class="w-[5px] h-[18px]"><use href="#grip"/></svg></i>
            <button aria-label="Color legend" class="w-8 h-8 flex items-center justify-center bg-[#dcdcdc] border border-[#a6a6a6] rounded-[3px]"><svg class="size-6"><use href="#bar"/></svg></button>
            <button aria-label="Edit color map" class="w-8 h-8 flex items-center justify-center"><svg class="size-6"><use href="#editmap"/></svg></button>
            <button aria-label="Separate color map" class="w-8 h-8 flex items-center justify-center"><svg class="size-6"><use href="#unlink"/></svg></button>
            <button aria-label="Rescale to data" class="w-8 h-8 flex items-center justify-center"><svg class="size-6"><use href="#range"/></svg></button>
            <button aria-label="Rescale to custom" class="w-8 h-8 flex items-center justify-center"><svg class="size-6"><use href="#range-c"/></svg></button>
            <button aria-label="Rescale over time" class="w-8 h-8 flex items-center justify-center"><svg class="size-6"><use href="#range-t"/></svg></button>
            <button aria-label="Rescale to visible" class="w-8 h-8 flex items-center justify-center"><svg class="size-6"><use href="#range-v"/></svg></button>
            <div class="relative w-[150px] mr-[4px]">
                <select aria-label="Color by" class="appearance-none w-full h-6 pl-[23px] border border-[#a6a6a6] rounded-[3px] bg-linear-to-b from-white to-[#ededed]"><option>temperature</option></select>
                <b class="absolute left-[11px] top-[10px] size-[5px] rounded-full bg-[#eeb62a] border border-[#b99437]"></b>
                <svg class="absolute right-[7px] top-[9px] w-2 h-[5px] text-[#555]"><use href="#down"/></svg>
            </div>
            <div class="relative w-[72px]">
                <select aria-label="Component" disabled class="appearance-none w-full h-6 border border-[#c2c2c2] rounded-[3px] bg-linear-to-b from-[#fafafa] to-[#efefef]"></select>
                <svg class="absolute right-[7px] top-[9px] w-2 h-[5px] text-[#a5a5a5]"><use href="#down"/></svg>
            </div>
            <i class="w-[17px] flex-none flex justify-end pr-1"><svg class="w-[5px] h-[18px]"><use href="#grip"/></svg></i>
            <div class="relative w-[150px]">
                <select aria-label="Representation style" class="appearance-none w-full h-6 pl-1 border border-[#a6a6a6] rounded-[3px] bg-linear-to-b from-white to-[#ededed]"><option>Surface</option></select>
                <svg class="absolute right-[7px] top-[9px] w-2 h-[5px] text-[#555]"><use href="#down"/></svg>
            </div>
            <i class="w-[17px] flex-none flex justify-end pr-1"><svg class="w-[5px] h-[18px]"><use href="#grip"/></svg></i>
            <button aria-label="Reset camera" class="w-8 h-8 flex items-center justify-center"><svg class="size-6"><use href="#resetcam"/></svg></button>
            <button aria-label="Zoom to data" class="w-8 h-8 flex items-center justify-center"><svg class="size-6"><use href="#zoomdata"/></svg></button>
            <button aria-label="Reset camera closest" class="w-8 h-8 flex items-center justify-center"><svg class="size-6"><use href="#ballout"/></svg></button>
            <button aria-label="Zoom closest to data" class="w-8 h-8 flex items-center justify-center"><svg class="size-6"><use href="#boxout"/></svg></button>
            <button aria-label="Zoom to box" class="w-8 h-8 flex items-center justify-center"><svg class="size-6"><use href="#zoombox"/></svg></button>
            <button aria-label="View +X" class="w-8 h-8 flex items-center justify-center"><svg class="size-6"><use href="#vxp"/></svg></button>
            <button aria-label="View -X" class="w-8 h-8 flex items-center justify-center"><svg class="size-6"><use href="#vxm"/></svg></button>
            <button aria-label="View +Y" class="w-8 h-8 flex items-center justify-center"><svg class="size-6"><use href="#vyp"/></svg></button>
            <button aria-label="View -Y" class="w-8 h-8 flex items-center justify-center"><svg class="size-6"><use href="#vym"/></svg></button>
            <button aria-label="View +Z" class="w-8 h-8 flex items-center justify-center"><svg class="size-6"><use href="#vzp"/></svg></button>
            <button aria-label="View -Z" class="w-8 h-8 flex items-center justify-center"><svg class="size-6"><use href="#vzm"/></svg></button>
            <button aria-label="Isometric view" class="w-8 h-8 flex items-center justify-center"><svg class="size-6"><use href="#iso"/></svg></button>
            <button aria-label="Rotate +90" class="w-8 h-8 flex items-center justify-center"><svg class="size-6"><use href="#rotp"/></svg></button>
            <button aria-label="Rotate -90" class="w-8 h-8 flex items-center justify-center"><svg class="size-6"><use href="#rotm"/></svg></button>
            <i class="w-[17px] flex-none flex justify-end pr-1"><svg class="w-[5px] h-[18px]"><use href="#grip"/></svg></i>
            <button aria-label="Show axes" class="w-8 h-8 flex items-center justify-center"><svg class="size-6"><use href="#axeye"/></svg></button>
            <button aria-label="Show center" class="w-8 h-8 flex items-center justify-center"><svg class="size-6"><use href="#center1"/></svg></button>
            <button aria-label="Reset center" class="w-8 h-8 flex items-center justify-center"><svg class="size-6"><use href="#center2"/></svg></button>
            <button aria-label="Pick center" class="w-8 h-8 flex items-center justify-center"><svg class="size-6"><use href="#center3"/></svg></button>
            <i class="w-[17px] flex-none flex justify-end pr-1"><svg class="w-[5px] h-[18px]"><use href="#grip"/></svg></i>
            <button aria-label="Light kit" class="w-8 h-8 flex items-center justify-center bg-[#dcdcdc] border border-[#a6a6a6] rounded-[3px]"><svg class="size-6"><use href="#bulb"/></svg></button>
            <i class="w-[17px] flex-none flex justify-end pr-1"><svg class="w-[5px] h-[18px]"><use href="#grip"/></svg></i>
        </div>

        <!-- Filters toolbar -->
        <div class="flex items-center h-[38px] flex-none bg-linear-to-b from-[#fafafa] to-[#ececec] border-b border-[#b4b4b4]">
            <i class="w-3 flex-none flex justify-end pr-[3px]"><svg class="w-[5px] h-[18px]"><use href="#grip"/></svg></i>
            <button aria-label="Calculator" class="w-[33px] h-8 flex items-center justify-center"><svg class="size-6"><use href="#calc"/></svg></button>
            <button aria-label="Contour" class="w-[33px] h-8 flex items-center justify-center"><svg class="size-6"><use href="#contour"/></svg></button>
            <button aria-label="Clip" class="w-[33px] h-8 flex items-center justify-center"><svg class="size-6"><use href="#clip"/></svg></button>
            <button aria-label="Slice" class="w-[33px] h-8 flex items-center justify-center"><svg class="size-6"><use href="#slice"/></svg></button>
            <button aria-label="Threshold" class="w-[33px] h-8 flex items-center justify-center"><svg class="size-6"><use href="#threshold"/></svg></button>
            <button aria-label="Extract subset" class="w-[33px] h-8 flex items-center justify-center"><svg class="size-6"><use href="#subset"/></svg></button>
            <button aria-label="Glyph" class="w-[33px] h-8 flex items-center justify-center"><svg class="size-6"><use href="#glyph"/></svg></button>
            <button aria-label="Stream tracer" class="w-[33px] h-8 flex items-center justify-center"><svg class="size-6"><use href="#stream"/></svg></button>
            <button aria-label="Warp by vector" class="w-[33px] h-8 flex items-center justify-center"><svg class="size-6"><use href="#warp"/></svg></button>
            <button aria-label="Group datasets" class="w-[33px] h-8 flex items-center justify-center"><svg class="size-6"><use href="#group"/></svg></button>
            <button aria-label="Extract level" class="w-[33px] h-8 flex items-center justify-center"><svg class="size-6"><use href="#level"/></svg></button>
            <i class="w-4 flex-none flex justify-end pr-1"><svg class="w-[5px] h-[18px]"><use href="#grip"/></svg></i>
            <button aria-label="Box plot" class="w-[33px] h-8 flex items-center justify-center"><svg class="size-6"><use href="#box-ax"/></svg></button>
            <button aria-label="Extract selection" class="w-[33px] h-8 flex items-center justify-center"><svg class="size-6"><use href="#extsel"/></svg></button>
            <button aria-label="Histogram" class="w-[33px] h-8 flex items-center justify-center"><svg class="size-6"><use href="#histo"/></svg></button>
            <button aria-label="Plot data over time" class="w-[33px] h-8 flex items-center justify-center"><svg class="size-6"><use href="#plottime"/></svg></button>
            <button aria-label="Plot over line" class="w-[33px] h-8 flex items-center justify-center"><svg class="size-6"><use href="#plotline"/></svg></button>
            <button aria-label="Plot selection over time" class="w-[33px] h-8 flex items-center justify-center"><svg class="size-6"><use href="#plotsel"/></svg></button>
            <button aria-label="Probe" class="w-[33px] h-8 flex items-center justify-center"><svg class="size-6"><use href="#probe"/></svg></button>
            <button aria-label="Programmable filter" class="w-[33px] h-8 flex items-center justify-center"><svg class="size-6"><use href="#program"/></svg></button>
            <i class="w-4 flex-none flex justify-end pr-1"><svg class="w-[5px] h-[18px]"><use href="#grip"/></svg></i>
            <button aria-label="Ruler" class="w-[33px] h-8 flex items-center justify-center"><svg class="size-6"><use href="#ruler"/></svg></button>
        </div>

        <main class="flex flex-1 min-h-0 pr-[2px]">

            <!-- Left docks -->
            <aside class="w-[482px] flex-none flex flex-col">
                <div class="flex items-center h-[21px] flex-none pl-1 pr-[2px] gap-[3px] pt-[2px]">
                    <h2 class="flex-1">Pipeline Browser</h2>
                    <button aria-label="Float"><svg class="size-[11px]"><use href="#float"/></svg></button>
                    <button aria-label="Close"><svg class="size-[11px]"><use href="#close"/></svg></button>
                </div>
                <div class="flex h-[179px] flex-none bg-white border-y border-[#b4b4b4] overflow-hidden">
                    <ul class="flex-1 -mt-4">
                        <li class="flex h-[22px] items-center"><svg class="w-[14px] h-3 ml-[5px] mr-[18px]"><use href="#eye-off"/></svg><svg class="w-[38px] h-[22px]"><use href="#g-mid"/></svg><svg class="size-4 mr-[3px]"><use href="#cube"/></svg>Secondary Winding</li>
                        <li class="flex h-[22px] items-center"><svg class="w-[14px] h-3 ml-[5px] mr-[18px]"><use href="#eye-off"/></svg><svg class="w-[38px] h-[22px]"><use href="#g-mid"/></svg><svg class="size-4 mr-[3px]"><use href="#cube"/></svg>All Windings</li>
                        <li class="flex h-[22px] items-center"><svg class="w-[14px] h-3 ml-[5px] mr-[18px]"><use href="#eye-off"/></svg><svg class="w-[38px] h-[22px]"><use href="#g-last"/></svg><svg class="size-4 mr-[3px]"><use href="#cube"/></svg>Temperature</li>
                        <li class="flex h-[22px] items-center"><svg class="w-[14px] h-3 ml-[5px] mr-[18px]"><use href="#eye-off"/></svg><svg class="w-5 h-[22px]" viewBox="0 0 20 22"><path d="M10.500 0v22M15 11h5" stroke="#8a8a8a"/><path d="M6.500 7.500h8v8h-8z" fill="#fff" stroke="#8a8a8a"/><path d="M8 11.500h5" stroke="#000"/></svg><svg class="size-4 mr-[3px]"><use href="#cube"/></svg>General Results</li>
                        <li class="flex h-[22px] items-center"><svg class="w-[14px] h-3 ml-[5px] mr-[18px]"><use href="#eye-off"/></svg><svg class="w-[38px] h-[22px]"><use href="#g-mid"/></svg><svg class="size-4 mr-[3px]"><use href="#cube"/></svg>Air</li>
                        <li class="flex h-[22px] items-center"><svg class="w-[14px] h-3 ml-[5px] mr-[19px]"><use href="#eye-on"/></svg><span class="flex items-center h-[18px] pr-1 bg-[#1080dc] text-white overflow-hidden"><svg class="w-[37px] h-[22px]" viewBox="1 0 37 22"><use href="#g-mid" width="38" height="22"/></svg><svg class="size-4 mr-[3px]"><use href="#cube"/><path d="M0 0h16v16H0z" fill="#1080dc" opacity=".25"/></svg>Core</span></li>
                        <li class="flex h-[22px] items-center"><svg class="w-[14px] h-3 ml-[5px] mr-[18px]"><use href="#eye-off"/></svg><svg class="w-[38px] h-[22px]"><use href="#g-mid"/></svg><svg class="size-4 mr-[3px]"><use href="#cube"/></svg>Gap</li>
                        <li class="flex h-[22px] items-center"><svg class="w-[14px] h-3 ml-[5px] mr-[18px]"><use href="#eye-off"/></svg><svg class="w-[38px] h-[22px]"><use href="#g-mid"/></svg><svg class="size-4 mr-[3px]"><use href="#cube"/></svg>Bobbin</li>
                        <li class="flex h-[22px] items-center"><svg class="w-[14px] h-3 ml-[5px] mr-[18px]"><use href="#eye-off"/></svg><svg class="w-[38px] h-[22px]"><use href="#g-mid"/></svg><svg class="size-4 mr-[3px]"><use href="#cube"/></svg>Primary Winding</li>
                    </ul>
                    <div class="w-[15px] flex flex-col bg-[#e4e4e4] border-x border-[#b4b4b4] text-[#555]">
                        <div class="h-[13px] bg-[#f4f4f4] border-b border-[#b4b4b4] flex items-center justify-center"><svg class="w-2 h-[5px] rotate-180"><use href="#down"/></svg></div>
                        <div class="h-16"></div>
                        <div class="h-[54px] bg-linear-to-b from-white to-[#f4f4f4] border-y border-[#b4b4b4]"></div>
                        <div class="flex-1"></div>
                        <div class="h-[14px] bg-[#f4f4f4] border-t border-[#b4b4b4] flex items-center justify-center"><svg class="w-2 h-[5px]"><use href="#down"/></svg></div>
                    </div>
                </div>
                <div class="h-[7px] flex-none flex justify-center"><svg class="w-4 h-[3px] mt-px" viewBox="0 0 16 3"><path d="M0 .5h16M1 2.500h15" stroke="#c4c4c4" stroke-dasharray="1 2"/></svg></div>

                <!-- Dock tabs -->
                <div class="flex items-end h-[26px] flex-none border-b border-[#b4b4b4]">
                    <button class="h-[26px] w-[83px] pt-px border border-b-0 border-[#b4b4b4] rounded-t-[3px] bg-linear-to-b from-[#fbfbfb] to-[#efefef]">Properties</button>
                    <button class="h-6 w-[89px] pt-[2px] border border-b-0 border-l-0 border-[#b4b4b4] rounded-tr-[3px] bg-[#dadada]">Information</button>
                </div>
                <div class="flex items-center h-[23px] flex-none pl-1 pr-[2px] gap-[3px]">
                    <h2 class="flex-1">Properties</h2>
                    <button aria-label="Float"><svg class="size-[11px]"><use href="#float"/></svg></button>
                    <button aria-label="Close"><svg class="size-[11px]"><use href="#close"/></svg></button>
                </div>

                <div class="flex flex-col flex-1 min-h-0 pl-[9px] pr-[9px] pt-[6px]">
                    <div class="grid grid-cols-4 gap-[2px] h-6 flex-none">
                        <button disabled class="flex items-center justify-center gap-1 border border-[#b8b8b8] rounded-[3px] bg-linear-to-b from-white to-[#ededed] text-[#8a8a8a]"><svg class="size-[14px] grayscale opacity-60"><use href="#extract"/></svg>Apply</button>
                        <button disabled class="flex items-center justify-center gap-[3px] border border-[#b8b8b8] rounded-[3px] bg-linear-to-b from-white to-[#ededed] text-[#8a8a8a]"><svg class="size-[14px]" viewBox="0 0 14 14"><circle cx="7" cy="7" r="5.500" fill="none" stroke="#9a9a9a" stroke-width="2.400"/><path d="M3.500 10.500l7-7" stroke="#9a9a9a" stroke-width="2.200"/></svg>Reset</button>
                        <button class="flex items-center justify-center gap-1 border border-[#a6a6a6] rounded-[3px] bg-linear-to-b from-white to-[#ededed]"><svg class="size-3" viewBox="0 0 12 12"><path d="M2 2l8 8M10 2l-8 8" stroke="#e02a24" stroke-width="3.600"/></svg>Delete</button>
                        <button aria-label="Help" class="flex items-center justify-center border border-[#a6a6a6] rounded-[3px] bg-linear-to-b from-white to-[#ededed]"><svg class="w-3 h-[15px]" viewBox="0 0 12 15"><path d="M2 4.500C2 .5 9.500.5 9.500 4.500 9.500 7 6 7 6 10.500M6 12v3" fill="none" stroke="#6d8a55" stroke-width="2.800"/><path d="M2 4.500C2 .5 9.500.5 9.500 4.500 9.500 7 6 7 6 10.500M6 12v3" fill="none" stroke="#9cc980" stroke-width="1.600"/></svg></button>
                    </div>
                    <div class="flex gap-[2px] h-6 mt-[6px] flex-none">
                        <input aria-label="Search properties" type="text" placeholder="Search ... (use Esc to clear text)" class="flex-1 min-w-0 px-[2px] border border-[#a6a6a6] rounded-[3px] bg-white placeholder:text-[#8a8a8a]">
                        <button aria-label="Advanced" class="w-6 h-[23px] flex items-center justify-center bg-[#dadada] border border-[#b0b0b0] rounded-[3px]"><svg class="size-[15px]"><use href="#gear"/></svg></button>
                    </div>

                    <!-- Scrolled properties -->
                    <div class="flex flex-1 min-h-0 mt-[6px] mb-[9px] overflow-hidden">
                        <div class="flex-1 min-w-0 pt-1">
                            <div class="flex gap-1 h-[25px] items-center">
                                <button class="flex flex-1 items-center h-[26px] border border-[#b4b4b4] pl-[10px] text-[13px] font-bold whitespace-nowrap"><span class="w-[13px] h-[5px] mr-2 bg-[#2f93c8] border border-[#7a9aa8]"></span>Display (UnstructuredGridRepresentation)</button>
                                <button aria-label="Copy" class="w-7 h-6 flex-none flex items-center justify-center border border-[#a6a6a6] rounded-[3px] bg-linear-to-b from-white to-[#ededed]"><svg class="size-[15px]"><use href="#copy"/></svg></button>
                                <button aria-label="Paste" class="w-7 h-6 flex-none flex items-center justify-center border border-[#c2c2c2] rounded-[3px] bg-linear-to-b from-white to-[#ededed]"><svg class="size-[15px]"><use href="#paste"/></svg></button>
                                <button aria-label="Restore" class="w-7 h-6 flex-none flex items-center justify-center border border-[#a6a6a6] rounded-[3px] bg-linear-to-b from-white to-[#ededed]"><svg class="size-[15px]"><use href="#refresh"/></svg></button>
                                <button aria-label="Save as default" class="w-7 h-6 flex-none flex items-center justify-center border border-[#a6a6a6] rounded-[3px] bg-linear-to-b from-white to-[#ededed]"><svg class="size-[15px]"><use href="#floppy"/></svg></button>
                            </div>
                            <div class="flex items-center mt-[6px]">
                                <label for="rep" class="w-[101px]">Representation</label>
                                <select id="rep" class="appearance-none flex-1 h-6 pl-1 border border-[#a6a6a6] rounded-[3px] bg-linear-to-b from-white to-[#ededed]"><option>Surface</option></select>
                            </div>
                            <h3 class="text-[13px] leading-4 font-bold h-[18px] mt-2 border-b border-[#9a9a9a]">Coloring</h3>
                            <div class="flex gap-[5px] mt-[5px] pr-8">
                                <div class="relative flex-1">
                                    <select aria-label="Color array" class="appearance-none w-full h-6 pl-6 border border-[#a6a6a6] rounded-[3px] bg-linear-to-b from-white to-[#ededed]"><option>temperature</option></select>
                                    <b class="absolute left-[11px] top-[10px] size-[5px] rounded-full bg-[#eeb62a] border border-[#b99437]"></b>
                                    <svg class="absolute right-[7px] top-[9px] w-2 h-[5px] text-[#555]"><use href="#down"/></svg>
                                </div>
                                <div class="relative flex-1">
                                    <select aria-label="Color component" disabled class="appearance-none w-full h-6 border border-[#c2c2c2] rounded-[3px] bg-linear-to-b from-[#fafafa] to-[#efefef]"></select>
                                    <svg class="absolute right-[7px] top-[9px] w-2 h-[5px] text-[#a5a5a5]"><use href="#down"/></svg>
                                </div>
                            </div>
                            <div class="flex gap-1 h-6 mt-1">
                                <button class="flex flex-1 items-center justify-center gap-1 border border-[#a6a6a6] rounded-[3px] bg-linear-to-b from-white to-[#ededed]"><svg class="size-[14px]"><use href="#editmap"/></svg>Edit</button>
                                <button aria-label="Separate color map" class="w-7 flex-none flex items-center justify-center border border-[#a6a6a6] rounded-[3px] bg-linear-to-b from-white to-[#ededed]"><svg class="size-[15px]"><use href="#unlink"/></svg></button>
                                <button aria-label="Rescale" class="w-7 flex-none flex items-center justify-center border border-[#a6a6a6] rounded-[3px] bg-linear-to-b from-white to-[#ededed]"><svg class="size-4"><use href="#range"/></svg></button>
                                <button aria-label="Rescale custom" class="w-7 flex-none flex items-center justify-center border border-[#a6a6a6] rounded-[3px] bg-linear-to-b from-white to-[#ededed]"><svg class="size-4"><use href="#range-c"/></svg></button>
                                <button aria-label="Rescale temporal" class="w-7 flex-none flex items-center justify-center border border-[#a6a6a6] rounded-[3px] bg-linear-to-b from-white to-[#ededed]"><svg class="size-4"><use href="#range-t"/></svg></button>
                                <button aria-label="Presets" class="w-7 flex-none flex items-center justify-center border border-[#a6a6a6] rounded-[3px] bg-linear-to-b from-white to-[#ededed]"><svg class="size-4"><use href="#fav"/></svg></button>
                                <button aria-label="Legend" class="w-7 flex-none flex items-center justify-center border border-[#b0b0b0] rounded-[3px] bg-[#dadada]"><svg class="size-4"><use href="#bar"/></svg></button>
                                <button aria-label="Edit legend" class="w-7 flex-none flex items-center justify-center border border-[#a6a6a6] rounded-[3px] bg-linear-to-b from-white to-[#ededed]"><svg class="size-[18px]"><use href="#jet-e"/></svg></button>
                            </div>
                            <h3 class="text-[13px] leading-4 font-bold h-[18px] mt-2 border-b border-[#9a9a9a]">Scalar Coloring</h3>
                            <label class="relative flex items-center h-[26px] mt-1 gap-[5px]">
                                <input type="checkbox" checked class="peer appearance-none size-[14px] bg-white border border-[#aaa]">
                                <svg class="absolute left-[2px] size-[10px] hidden peer-checked:block" viewBox="0 0 10 10"><path d="M1.500 5l2.500 3.500L8.500 1" fill="none" stroke="#000" stroke-width="1.800"/></svg>
                                Map Scalars
                            </label>
                            <label class="relative flex items-center h-[26px] gap-[5px]">
                                <input type="checkbox" checked class="peer appearance-none size-[14px] bg-white border border-[#aaa]">
                                <svg class="absolute left-[2px] size-[10px] hidden peer-checked:block" viewBox="0 0 10 10"><path d="M1.500 5l2.500 3.500L8.500 1" fill="none" stroke="#000" stroke-width="1.800"/></svg>
                                Interpolate Scalars Before Mapping
                            </label>
                            <h3 class="text-[13px] leading-4 font-bold h-[18px] mt-[5px] border-b border-[#9a9a9a]">Styling</h3>
                            <div class="flex items-center mt-[5px]">
                                <label for="opacity" class="w-[101px]">Opacity</label>
                                <input id="opacity" type="range" min="0" max="1" step="0.01" value="1" class="appearance-none w-[172px] h-[5px] mr-[6px] rounded-xs bg-[#1e8ae6] border border-[#1768b0] [&::-webkit-slider-thumb]:appearance-none [&::-webkit-slider-thumb]:size-[13px] [&::-webkit-slider-thumb]:bg-white [&::-webkit-slider-thumb]:border [&::-webkit-slider-thumb]:border-[#999] [&::-webkit-slider-thumb]:rounded-[3px]">
                                <input aria-label="Opacity value" type="text" value="1" class="flex-1 min-w-0 h-6 px-[2px] border border-[#a6a6a6] rounded-[3px] bg-white">
                            </div>
                            <div class="flex items-center mt-1">
                                <label for="psize" class="w-[101px]">Point Size</label>
                                <input id="psize" type="text" value="2" class="flex-1 min-w-0 h-6 px-[2px] border border-[#a6a6a6] rounded-[3px] bg-white">
                            </div>
                            <div class="flex mt-1 pl-[101px]">
                                <input aria-label="Line width" type="text" class="flex-1 min-w-0 h-6 px-[2px] border border-[#a6a6a6] rounded-[3px] bg-white">
                            </div>
                        </div>
                        <div class="w-[14px] flex-none flex flex-col bg-[#e4e4e4] border-l border-[#b4b4b4] text-[#555]">
                            <div class="h-[14px] bg-[#fbfbfb] border-b border-[#b4b4b4] flex items-center justify-center"><svg class="w-2 h-[5px] rotate-180"><use href="#down"/></svg></div>
                            <div class="h-6"></div>
                            <div class="h-[37px] bg-linear-to-b from-white to-[#f4f4f4] border-y border-[#b4b4b4]"></div>
                            <div class="flex-1"></div>
                            <div class="h-[14px] bg-[#fbfbfb] border-t border-[#b4b4b4] flex items-center justify-center"><svg class="w-2 h-[5px]"><use href="#down"/></svg></div>
                        </div>
                    </div>
                </div>
            </aside>

            <div class="w-[6px] flex-none flex flex-col justify-center items-center border-r border-[#b0b0b0]"><svg class="w-[5px] h-[18px]"><use href="#grip"/></svg></div>

            <!-- Layout tabs and render view -->
            <section class="flex flex-col flex-1 min-w-0 pl-px">
                <div class="flex items-end h-[27px] flex-none border-b border-[#b0b0b0]">
                    <div class="flex items-center justify-center h-[25px] w-[102px] gap-2 bg-[#fbfbfb] border border-b-0 border-[#b4b4b4] rounded-t-[3px]">Layout #1 <svg class="size-[11px]"><use href="#close"/></svg></div>
                    <button class="h-6 w-[44px] border border-b-0 border-l-0 border-[#b4b4b4] rounded-tr-[3px] bg-[#e6e6e6]">+</button>
                </div>
                <div class="flex items-center h-[28px] flex-none pl-px">
                    <button aria-label="Camera undo" class="w-[26px] flex justify-center"><svg class="size-[18px]"><use href="#cam-undo"/></svg></button>
                    <button aria-label="Camera redo" class="w-[26px] flex justify-center"><svg class="size-[18px]"><use href="#cam-redo"/></svg></button>
                    <span class="w-px h-4 mx-[2px] bg-[#cfcfcf]"></span>
                    <button aria-label="Capture" class="w-[26px] flex justify-center"><svg class="size-[18px]"><use href="#cam-cap"/></svg></button>
                    <span class="w-px h-4 mx-[3px] bg-[#cfcfcf]"></span>
                    <button class="w-[26px] text-[11px] font-semibold text-[#6b6b50]">3D</button>
                    <button aria-label="Adjust camera" class="w-[26px] flex justify-center"><svg class="size-[18px]"><use href="#cam-pencil"/></svg></button>
                    <span class="w-px h-4 mx-[3px] bg-[#cfcfcf]"></span>
                    <button aria-label="Add selection" class="w-[26px] flex justify-center"><svg class="size-[18px]"><use href="#sel-add"/></svg></button>
                    <button aria-label="Subtract selection" class="w-[26px] flex justify-center"><svg class="size-[18px]"><use href="#sel-sub"/></svg></button>
                    <button aria-label="Toggle selection" class="w-[26px] flex justify-center"><svg class="size-[18px]"><use href="#sel-tog"/></svg></button>
                    <span class="w-px h-4 mx-[2px] bg-[#cfcfcf]"></span>
                    <button aria-label="Select cells on" class="w-[26px] flex justify-center"><svg class="size-[18px]"><use href="#sel-cell"/></svg></button>
                    <button aria-label="Select points on" class="w-[26px] flex justify-center"><svg class="size-[18px]"><use href="#sel-pt"/></svg></button>
                    <button aria-label="Select cells through" class="w-[26px] flex justify-center"><svg class="size-[18px]"><use href="#sel-fc"/></svg></button>
                    <button aria-label="Select points through" class="w-[26px] flex justify-center"><svg class="size-[18px]"><use href="#sel-fp"/></svg></button>
                    <button aria-label="Select cells with polygon" class="w-[26px] flex justify-center"><svg class="size-[18px]"><use href="#sel-pc"/></svg></button>
                    <button aria-label="Select points with polygon" class="w-[26px] flex justify-center"><svg class="size-[18px]"><use href="#sel-pp"/></svg></button>
                    <button aria-label="Select block" class="w-[26px] flex justify-center"><svg class="size-[18px]"><use href="#sel-blk"/></svg></button>
                    <button aria-label="Select frustum block" class="w-[26px] flex justify-center"><svg class="size-[18px]"><use href="#sel-fb"/></svg></button>
                    <button aria-label="Interactive" class="w-[26px] flex justify-center"><svg class="size-[18px]"><use href="#hov-any"/></svg></button>
                    <button aria-label="Interactive cells" class="w-[26px] flex justify-center"><svg class="size-[18px]"><use href="#hov-cell"/></svg></button>
                    <button aria-label="Interactive points" class="w-[26px] flex justify-center"><svg class="size-[18px]"><use href="#hov-pt"/></svg></button>
                    <button aria-label="Hover cells" class="w-[26px] flex justify-center"><svg class="size-[18px]"><use href="#q-cell"/></svg></button>
                    <button aria-label="Hover points" class="w-[26px] flex justify-center"><svg class="size-[18px]"><use href="#q-pt"/></svg></button>
                    <button aria-label="Grow selection" class="w-[26px] flex justify-center"><svg class="size-[18px]"><use href="#grow"/></svg></button>
                    <button aria-label="Shrink selection" class="w-[26px] flex justify-center"><svg class="size-[18px]"><use href="#shrink"/></svg></button>
                    <button aria-label="More" class="w-6 flex justify-center"><svg class="w-[9px] h-[7px]" viewBox="0 0 9 7"><path d="M1 .5l3 3-3 3M5 .5l3 3-3 3" fill="none" stroke="#333" stroke-width="1.200"/></svg></button>
                    <a href="#" class="flex-1 text-right pr-[11px] text-[13px] font-bold underline underline-offset-2">RenderView1</a>
                    <div class="flex gap-px">
                        <button aria-label="Split horizontal" class="w-[26px] h-[25px] flex items-center justify-center border border-[#a6a6a6] rounded-[3px] bg-linear-to-b from-white to-[#ededed]"><svg class="size-[14px]" viewBox="0 0 14 14"><path d="M.5.5h13v13H.500zM7 .5v13" fill="#cdd6ef" stroke="#8d97b0"/></svg></button>
                        <button aria-label="Split vertical" class="w-[26px] h-[25px] flex items-center justify-center border border-[#a6a6a6] rounded-[3px] bg-linear-to-b from-white to-[#ededed]"><svg class="size-[14px]" viewBox="0 0 14 14"><path d="M.5.5h13v13H.500zM.5 7h13" fill="#cdd6ef" stroke="#8d97b0"/></svg></button>
                        <button aria-label="Maximize view" class="w-[26px] h-[25px] flex items-center justify-center border border-[#a6a6a6] rounded-[3px] bg-linear-to-b from-white to-[#ededed]"><svg class="size-[18px]" viewBox="0 0 18 18"><path d="M.5.5h17v17H.500z" fill="#fff" stroke="#333"/><path d="M0 0h18v5H0z" fill="#333"/></svg></button>
                        <button aria-label="Close view" class="w-[26px] h-[25px] flex items-center justify-center border border-[#a6a6a6] rounded-[3px] bg-linear-to-b from-white to-[#ededed]"><svg class="size-[11px]"><use href="#close"/></svg></button>
                    </div>
                </div>

                <div class="flex-1 min-h-0 border-2 border-[#0000f5] bg-white mb-[2px]">
                    <svg class="w-full h-full" viewBox="492 226 871 581" xmlns="http://www.w3.org/2000/svg">
                        <defs>
                            <linearGradient id="wall" x1="0" x2="1" y1="0" y2="0">
                                <stop offset="0" stop-color="#3d4c74"/><stop offset=".5" stop-color="#526588"/><stop offset=".85" stop-color="#66716f"/><stop offset="1" stop-color="#7c776b"/>
                            </linearGradient>
                            <linearGradient id="roof" x1="0" x2="1" y1="0" y2="0">
                                <stop offset="0" stop-color="#19223c"/><stop offset=".6" stop-color="#1c2939"/><stop offset="1" stop-color="#2e3434"/>
                            </linearGradient>
                            <linearGradient id="coolwarm" x1="0" x2="0" y1="0" y2="1">
                                <stop offset="0" stop-color="#b40426"/><stop offset=".125" stop-color="#d95847"/><stop offset=".25" stop-color="#f18d6f"/><stop offset=".375" stop-color="#f7b99e"/><stop offset=".5" stop-color="#dddddd"/><stop offset=".625" stop-color="#b9d0f9"/><stop offset=".75" stop-color="#8db0fe"/><stop offset=".875" stop-color="#6282ea"/><stop offset="1" stop-color="#3b4cc0"/>
                            </linearGradient>
                        </defs>

                        <!-- Core plate, painted by the script below -->
                        <foreignObject x="726" y="313" width="404" height="407">
                            <canvas id="field" width="404" height="407" class="block"></canvas>
                        </foreignObject>
                        <path d="M725.500 313h405v407h-405z" fill="none" stroke="#a9aba4" stroke-width="1.200"/>

                        <!-- Windows in the core -->
                        <g id="slot">
                            <path d="M790 378h76v277h-76z" fill="#141a36"/>
                            <path d="M790 378h76v10h-66z" fill="url(#roof)"/>
                            <path d="M800 645h66v10h-76z" fill="url(#wall)"/>
                            <path d="M800 388h66v257h-66z" fill="#fff"/>
                        </g>
                        <use href="#slot" transform="translate(1856 0) scale(-1 1)"/>

                        <path d="M741 310v3M803 310v3M865 310v3M928 310v3M990 310v3M1052 310v3M1115 310v3M741 720v3M803 720v3M865 720v3M928 720v3M990 720v3M1052 720v3M1115 720v3M723 330h3M723 392h3M723 454h3M723 516h3M723 578h3M723 640h3M723 702h3M1131 330h3M1131 392h3M1131 454h3M1131 516h3M1131 578h3M1131 640h3M1131 702h3" stroke="#cfcfca"/>

                        <!-- Axis labels -->
                        <g font-family="Lato, sans-serif" font-size="12" fill="#d3d3ce" text-anchor="middle">
                            <text x="928" y="280">X Axis</text><text x="928" y="759">X Axis</text>
                            <text x="741" y="300">0.03</text><text x="803" y="300">0.02</text><text x="865" y="300">0.01</text><text x="928" y="300">0</text><text x="990" y="300">-0.01</text><text x="1052" y="300">-0.02</text><text x="1114" y="300">-0.03</text>
                            <text x="741" y="739">0.03</text><text x="803" y="739">0.02</text><text x="865" y="739">0.01</text><text x="928" y="739">0</text><text x="990" y="739">-0.01</text><text x="1052" y="739">-0.02</text><text x="1114" y="739">-0.03</text>
                        </g>
                        <g font-family="Lato, sans-serif" font-size="12" fill="#d3d3ce" text-anchor="end">
                            <text x="716" y="334">0.03</text><text x="716" y="396">0.02</text><text x="716" y="458">0.01</text><text x="716" y="520">0</text><text x="716" y="582">-0.01</text><text x="716" y="644">-0.02</text><text x="716" y="706">-0.03</text><text x="696" y="520">Y Axis</text>
                        </g>
                        <g font-family="Lato, sans-serif" font-size="12" fill="#d3d3ce">
                            <text x="1140" y="334">0.03</text><text x="1140" y="396">0.02</text><text x="1140" y="458">0.01</text><text x="1140" y="520">0</text><text x="1140" y="582">-0.01</text><text x="1140" y="644">-0.02</text><text x="1140" y="706">-0.03</text><text x="1160" y="520">Y Axis</text>
                        </g>

                        <!-- Color legend -->
                        <path d="M1246 603h16v191h-16z" fill="url(#coolwarm)"/>
                        <path d="M1259 603.500h12M1259 629.500h12M1259 680.500h12M1259 730.500h12M1259 794.500h12" stroke="#000" stroke-width="1.200"/>
                        <g font-family="Lato, sans-serif" font-size="16" fill="#111">
                            <text x="1275" y="607">9.5e+01</text><text x="1275" y="633">90</text><text x="1275" y="684">80</text><text x="1275" y="734">70</text><text x="1275" y="798">5.7e+01</text>
                            <text transform="translate(1352 746) rotate(-90)" font-size="18">temperature</text>
                        </g>
                    </svg>
                </div>
            </section>
        </main>

        <!-- Status bar -->
        <footer class="flex items-center h-[31px] flex-none pl-[447px] pr-6 border-t border-[#c8c8c8]">
            <button aria-label="Abort" class="w-5 h-[19px] flex-none flex items-center justify-center border border-[#b8b8b8] rounded-[3px] bg-[#f6f6f6]"><svg class="size-2" viewBox="0 0 8 8"><path d="M1 1l6 6M7 1L1 7" stroke="#888" stroke-width="2.600"/></svg></button>
            <div class="flex-1 h-[26px] ml-[2px] mr-[6px] border-l border-t border-[#a8a8a8] border-b border-r border-b-white border-r-white"></div>
            <div class="relative w-[445px] h-[25px] border border-[#a6a6a6] rounded-[3px] bg-white overflow-hidden flex items-center justify-center">
                <div class="absolute left-0 inset-y-0 border-r border-[#76a876] bg-linear-to-b from-[#d8fbd6] to-[#b2d9b0]" style="width: 36.7%"></div>
                <span class="relative">DESKTOP-KFHJ6TB: 23.3 GiB/63.3 GiB 36.7%</span>
            </div>
            <svg class="absolute right-1 bottom-1 size-[9px]" viewBox="0 0 9 9"><path d="M7 1h1M4 4h1M7 4h1M1 7h1M4 7h1M7 7h1" stroke="#aaa"/></svg>
        </footer>
    </div>

    <!-- Annotations over the window -->
    <svg class="absolute inset-0 w-full h-full pointer-events-none drop-shadow-[0_1px_1px_rgba(0,0,0,0.55)]">
        <g fill="#f23c3c">
            <path d="M170 248L204 212l-1 13 64-31 3 7-62 33 11 6z"/>
            <path d="M124 299l47-16-6 11 103 1v9l-103-1 6 12z"/>
            <path d="M110 589l44-25-6 12 122-25 2 8-120 26 8 10z"/>
        </g>
        <g font-family="Liberation Sans, Arial, sans-serif" font-weight="700" font-size="48" fill="#fff" stroke="#f23c3c" stroke-width="6" stroke-linejoin="round" paint-order="stroke">
            <text x="285" y="203">General Results</text>
            <text x="288" y="315">Core</text>
            <text x="284" y="563">Temperature</text>
        </g>
    </svg>

    <script>
        // piecewise linear lookup over [[x, y], ...]
        function lerp(table, x) {
            if (x <= table[0][0]) return table[0][1];
            for (let i = 1; i < table.length; i++) {
                const [x0, y0] = table[i - 1], [x1, y1] = table[i];
                if (x <= x1) return y0 + (y1 - y0) * (x - x0) / (x1 - x0);
            }
            return table[table.length - 1][1];
        }

        const center = [[0, .975], [21, .972], [40, .96], [70, .92], [96, .865], [115, .8], [134, .735], [149, .69], [168, .63], [186, .58], [204, .54], [226, .475], [240, .44]];
        const outer = [[62, .475], [75, .455], [88, .425], [118, .35], [138, .295], [163, .215], [185, .15], [202, .1]];
        const leg = [[0, 0], [30, .03], [50, .09], [75, .25], [100, .5], [120, .7], [140, .84], [165, .94], [204, 1]];
        const map = [[0, 0x36489a], [.1, 0x4258a8], [.2, 0x5068b1], [.3, 0x6984bd], [.4, 0x849cbe], [.47, 0x9aa6b0], [.55, 0xa8aaa3], [.64, 0xb5a695], [.69, 0xbd9a84], [.735, 0xc68f77], [.8, 0xc47a60], [.865, 0xbd6147], [.92, 0xa94030], [.96, 0x9b2924], [.975, 0x941e21], [1, 0x8f131c]];
        const channels = [16, 8, 0].map(s => map.map(([t, c]) => [t, (c >> s) & 255]));

        function temperature(x, y) {
            const ax = Math.abs(x), ay = Math.abs(y);
            const bend = ay < 115 ? 18 * (ay / 115) ** 2 : Math.min(32, 18 + (ay - 115) * .6);
            if (ax <= 62) {
                return lerp(center, ay + bend * (ax / 62) ** 2) + .025 * (ax / 62) ** 2 * Math.max(0, 1 - ay / 50);
            }
            const w = Math.min(1, (ax - 62) / 75);
            const edge = lerp(center, ay + bend) - .475;
            return lerp(outer, ax) * (1 - (1 - lerp(leg, ay)) * w) + edge * Math.exp(-(ax - 62) / 14);
        }

        const canvas = document.getElementById('field');
        const ctx = canvas.getContext('2d');
        const img = ctx.createImageData(canvas.width, canvas.height);
        for (let j = 0; j < canvas.height; j++) {
            for (let i = 0; i < canvas.width; i++) {
                const t = temperature(i - 202, j - 203);
                const p = (j * canvas.width + i) * 4;
                channels.forEach((c, k) => img.data[p + k] = lerp(c, t));
                img.data[p + 3] = 255;
            }
        }
        ctx.putImageData(img, 0, 0);
    </script>
</body>
</html>
